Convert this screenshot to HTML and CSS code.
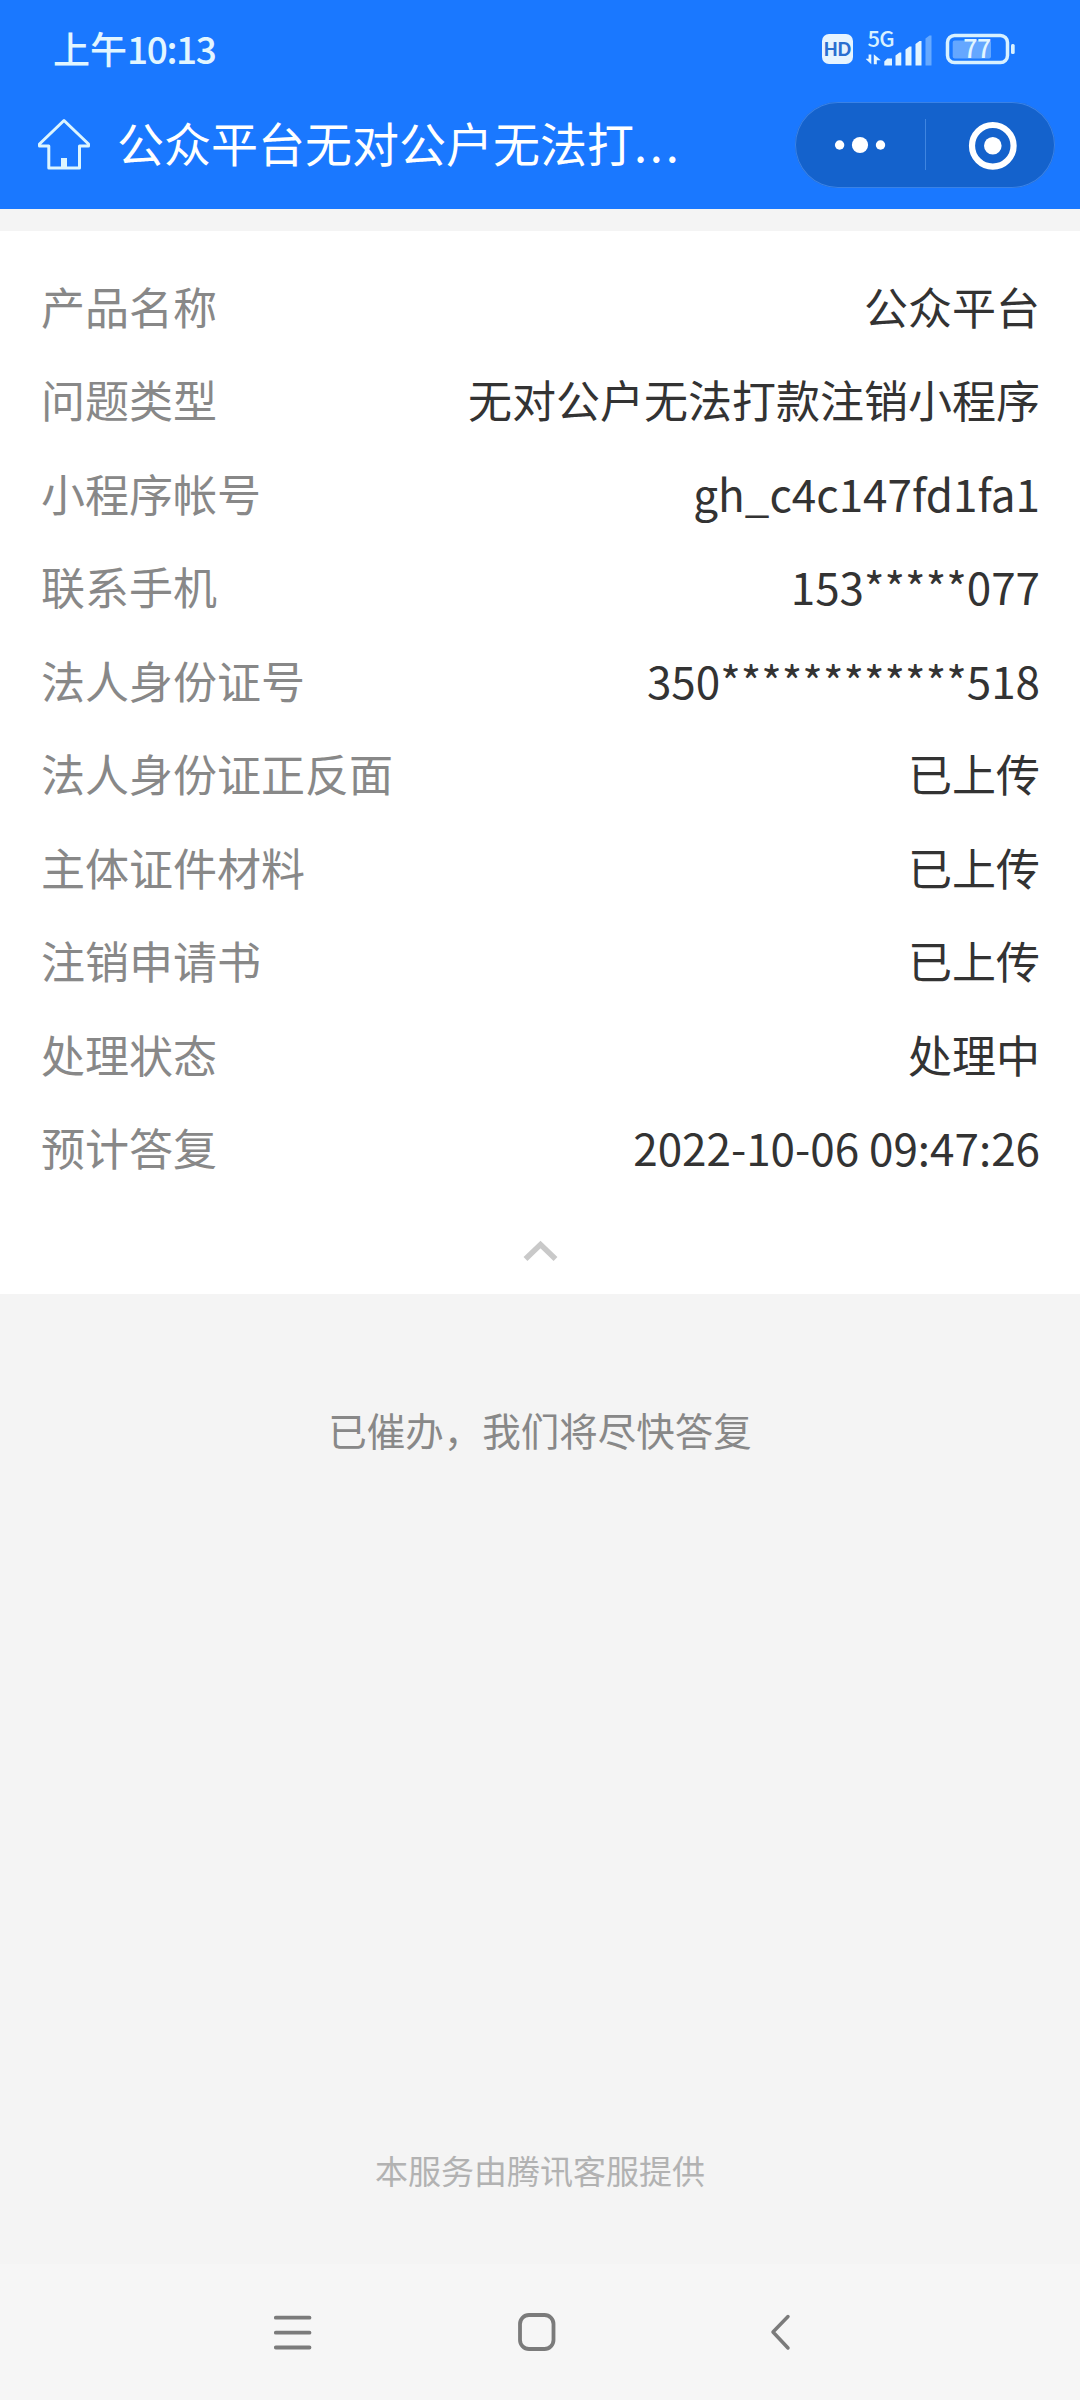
FILE: index.html
```html
<!DOCTYPE html>
<html lang="zh-CN">
<head>
  <meta charset="utf-8">
  <title>公众平台</title>
  <link rel="stylesheet" href="styles.css">
</head>
<body>
  <header class="header">
    <div class="status-bar">
      <div class="time">上午<span class="clock">10:13</span></div>
      <div class="status-icons">
        <span class="hd">HD</span>
        <svg class="signal" width="66" height="60" viewBox="866 18 66 60">
          <text x="867.5" y="46" class="signal-text">5G</text>
          <path fill="#e4f5ff" d="M868.6 53.5h2.7v9.8l-5.8-5.5h3.1zM873.8 63.3v-10l7 6h-4v4z"/>
          <path fill="#e4f5ff" d="M884.3 64.5v-4l3-3h4.7v7zM895.5 64.5v-10l4-3h1.8v13zM905.5 64.5v-16l4-3h2v19zM915.5 64.5v-21.5l4-3h2v24.5z"/>
          <path fill="#66a9ff" d="M925.5 64.5v-27l4-3h2v30z"/>
        </svg>
        <svg class="battery" width="70" height="60" viewBox="945 19 70 60">
          <rect x="947.5" y="35.5" width="60" height="27" rx="7" fill="none" stroke="#d8f1ff" stroke-width="3.5"/>
          <rect x="952.7" y="40.5" width="38.3" height="18" rx="2" fill="#65a7ff"/>
          <rect x="1011" y="44" width="3.7" height="10" rx="1.5" fill="#d8f1ff"/>
          <text x="977" y="58.3" text-anchor="middle" class="battery-text">77</text>
        </svg>
      </div>
    </div>
    <div class="nav-bar">
      <svg class="home" width="54" height="54" viewBox="37 118 54 54" fill="none" stroke="#dcf5ff" stroke-width="3" stroke-linejoin="round">
        <path d="M64 120.5L39.5 144V146H48.800V168H79.5V146H88.5V144Z"/>
        <path d="M61 158h6v9h-6z" fill="#dcf5ff" stroke="none"/>
      </svg>
      <h1 class="title">公众平台无对公户无法打<span class="dots">...</span></h1>
      <div class="capsule">
        <svg width="260" height="86" viewBox="795 102 260 86" fill="#fff">
          <circle cx="839.6" cy="145" r="4.7"/>
          <circle cx="860" cy="145" r="8.1"/>
          <circle cx="880.5" cy="145" r="4.7"/>
          <path d="M925.5 119v51" stroke="#3f85e0" stroke-width="1"/>
          <circle cx="992.8" cy="145.8" r="20.8" fill="none" stroke="#fff" stroke-width="6.2"/>
          <circle cx="992.8" cy="145.8" r="8.8"/>
        </svg>
      </div>
    </div>
  </header>

  <main class="main">
    <section class="detail">
      <dl class="list">
        <div class="row"><dt>产品名称</dt><dd>公众平台</dd></div>
        <div class="row"><dt>问题类型</dt><dd>无对公户无法打款注销小程序</dd></div>
        <div class="row"><dt>小程序帐号</dt><dd>gh_c4c147fd1fa1</dd></div>
        <div class="row"><dt>联系手机</dt><dd>153*****077</dd></div>
        <div class="row"><dt>法人身份证号</dt><dd>350************518</dd></div>
        <div class="row"><dt>法人身份证正反面</dt><dd>已上传</dd></div>
        <div class="row"><dt>主体证件材料</dt><dd>已上传</dd></div>
        <div class="row"><dt>注销申请书</dt><dd>已上传</dd></div>
        <div class="row"><dt>处理状态</dt><dd>处理中</dd></div>
        <div class="row"><dt>预计答复</dt><dd>2022-10-06 09:47:26</dd></div>
      </dl>
      <svg class="fold" width="40" height="26" viewBox="0 0 40 26">
        <path d="M4.5 21L19.5 6.5L34.5 21" fill="none" stroke="#c9c9c9" stroke-width="5.5"/>
      </svg>
    </section>
    <p class="tip">已催办，我们将尽快答复</p>
    <p class="provider">本服务由腾讯客服提供</p>
  </main>

  <footer class="system-nav">
    <svg width="40" height="40" viewBox="273 2312 40 40" fill="none" stroke="#7b7b7b" stroke-width="3.8" stroke-linecap="round">
      <path d="M275.8 2317.7h33.7M275.8 2332.7h33.7M275.8 2347.5h33.7"/>
    </svg>
    <svg width="40" height="40" viewBox="517 2312 40 40" fill="none" stroke="#7b7b7b" stroke-width="3.8">
      <rect x="520" y="2315" width="33.5" height="34" rx="9"/>
    </svg>
    <svg width="40" height="40" viewBox="761 2312 40 40" fill="none" stroke="#7b7b7b" stroke-width="3.5" stroke-linecap="round" stroke-linejoin="round">
      <path d="M788 2316.500L773 2332L788 2348"/>
    </svg>
  </footer>
</body>
</html>
```

FILE: styles.css
```css
* {
  box-sizing: border-box;
}

body {
  margin: 0;
  height: 2400px;
  display: flex;
  flex-direction: column;
  font-family: "Noto Sans CJK SC", sans-serif;
  background: #f4f4f4;
}

h1, p, dl, dd {
  margin: 0;
}

svg {
  display: block;
}

.header {
  height: 209px;
  background: #1a78ff;
  color: #fff;
}

.status-bar {
  height: 98px;
  padding: 0 65px 0 53px;
  display: flex;
  align-items: center;
  justify-content: space-between;
}

.time {
  font-size: 37px;
  font-weight: 500;
  line-height: 96px;
  padding-bottom: 2px;
  color: #e2f6ff;
}

.clock {
  letter-spacing: -1.4px;
}

.status-icons {
  display: flex;
  align-items: center;
}

.hd {
  width: 31px;
  height: 30px;
  border-radius: 7px;
  background: #e6f4ff;
  color: #2a6fd0;
  font: 900 18px/30px Lato, sans-serif;
  text-align: center;
}

.signal {
  margin-left: 13px;
}

.signal-text {
  font: 500 22px "Noto Sans CJK SC", sans-serif;
  letter-spacing: -0.8px;
  fill: #d8f1ff;
}

.battery {
  margin-left: 13px;
}

.battery-text {
  font: 500 25px "Noto Sans CJK SC", sans-serif;
  letter-spacing: -0.5px;
  fill: #e2f6ff;
}

.nav-bar {
  height: 94px;
  padding: 0 25px 0 37px;
  display: flex;
  align-items: center;
}

.title {
  flex: 1;
  margin-left: 26px;
  padding-bottom: 6px;
  font-size: 47px;
  font-weight: 400;
  line-height: 88px;
  white-space: nowrap;
}

.dots {
  letter-spacing: 2.8px;
}

.capsule {
  width: 260px;
  height: 86px;
  border-radius: 43px;
  background: #1462cc;
  box-shadow: inset 0 0 0 1px #3a82e6;
}

.main {
  flex: 1;
  display: flex;
  flex-direction: column;
}

.detail {
  height: 1063px;
  margin-top: 22px;
  padding: 28px 40px 0 41px;
  background: #fff;
}

.row {
  height: 93.5px;
  display: flex;
  align-items: center;
  justify-content: space-between;
  font-size: 44px;
  line-height: 64px;
}

.row dt {
  color: #888;
}

.row dd {
  color: #333;
}

.fold {
  margin: 44px auto 0;
}

.tip {
  margin-top: 107px;
  font-size: 38.5px;
  line-height: 56px;
  text-align: center;
  color: #888;
}

.provider {
  margin-top: auto;
  margin-bottom: 70px;
  font-size: 33px;
  line-height: 48px;
  text-align: center;
  color: #b2b2b2;
}

.system-nav {
  height: 136px;
  padding: 0 279px 0 273px;
  display: flex;
  align-items: center;
  justify-content: space-between;
  background: #f6f6f6;
}
```
